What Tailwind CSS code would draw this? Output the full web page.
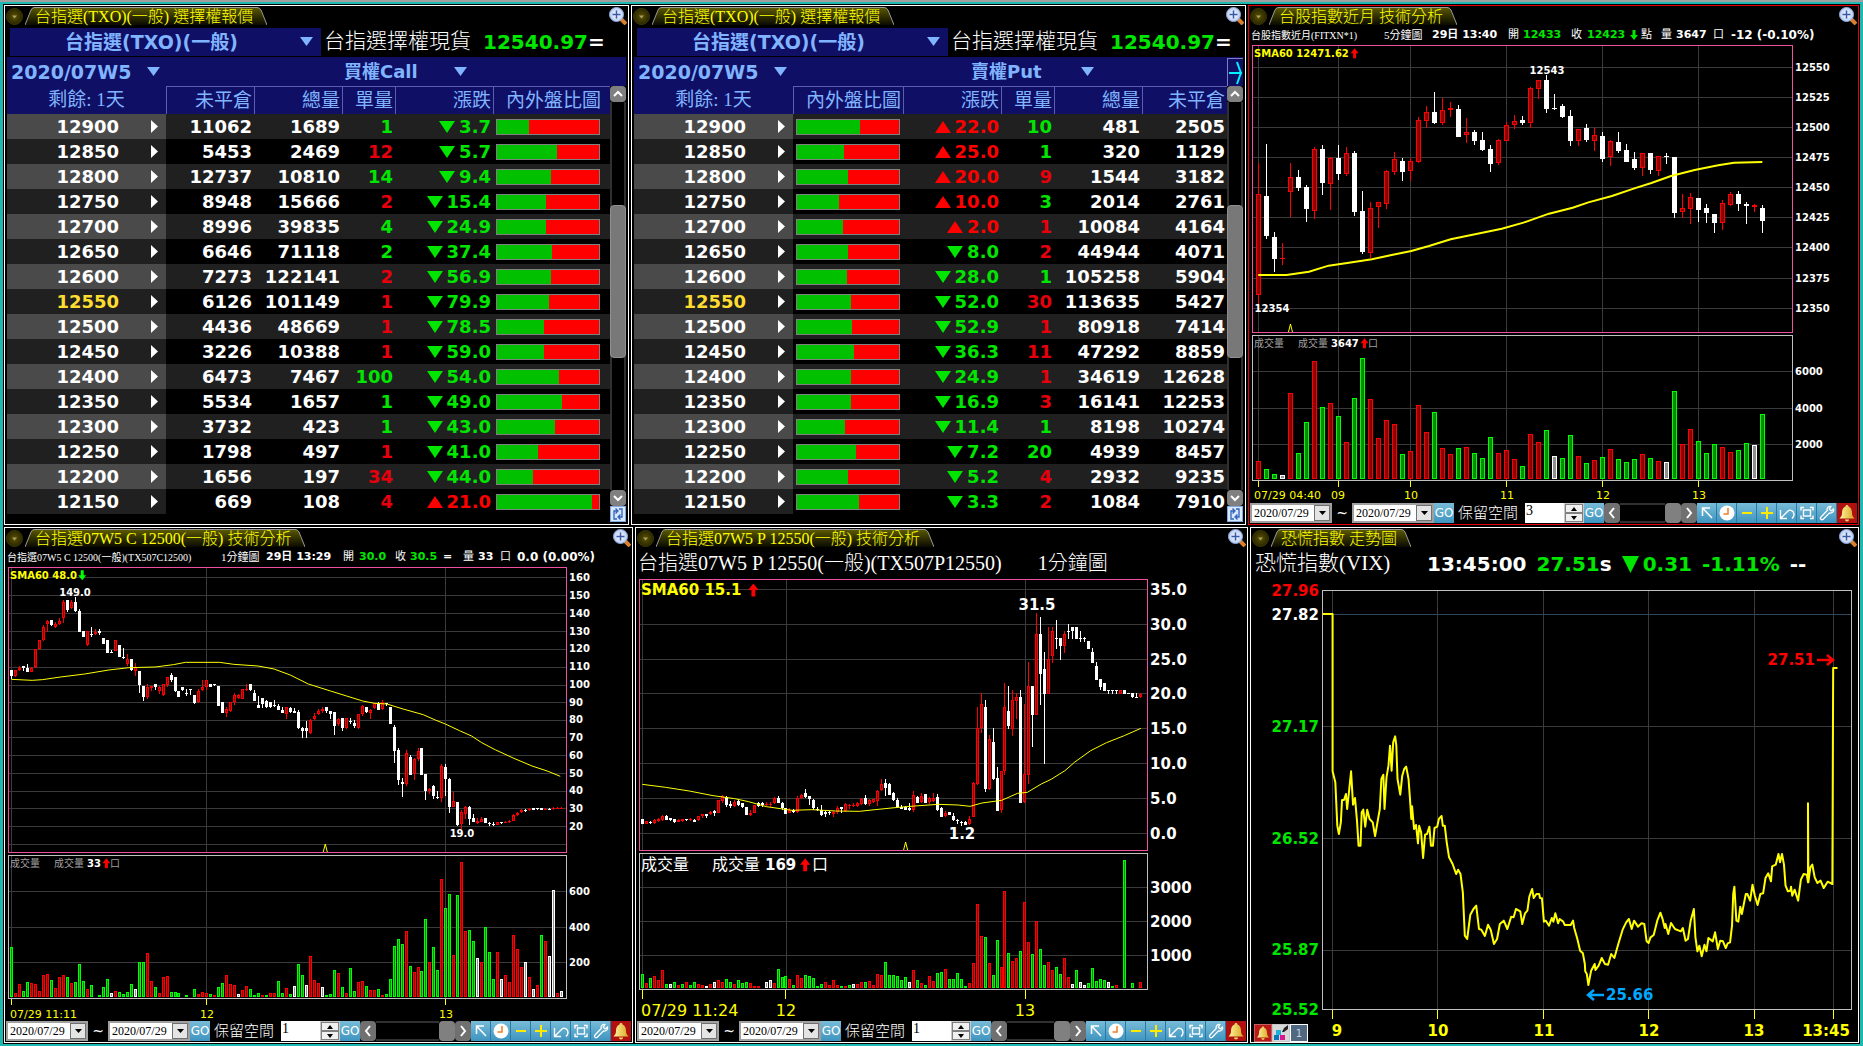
<!DOCTYPE html>
<html lang="zh-Hant">
<head>
<meta charset="utf-8">
<meta name="viewport" content="width=device-width, initial-scale=1">
<title>台指選擇權看盤</title>
<script src="https://cdn.jsdelivr.net/npm/@tailwindcss/browser@4"></script>
</head>
<body class="bg-[#1fb8b0] border-t-2 border-[#a0a0a0] text-white font-['DejaVu_Sans','Noto_Sans_CJK_TC',sans-serif]">

<svg class="absolute size-0" aria-hidden="true">
  <defs>
    <linearGradient id="tabFill" x1="0" y1="0" x2="0" y2="1"><stop offset="0" stop-color="#5c5a00"/><stop offset="1" stop-color="#0a0a00"/></linearGradient>
    <radialGradient id="lens"><stop offset="0" stop-color="#ffffff"/><stop offset="1" stop-color="#b8ccf4"/></radialGradient>
    <radialGradient id="knob"><stop offset="0" stop-color="#5a5200"/><stop offset="1" stop-color="#2a2600"/></radialGradient>
    <linearGradient id="bellFill" x1="0" x2="1"><stop offset="0" stop-color="#fff3a0"/><stop offset="1" stop-color="#d8a820"/></linearGradient>
    <symbol id="bell" viewBox="0 0 20 20"><path d="M10 2c1 0 1.500.7 1.500 1.500C14 4.500 15 7 15 10c0 2.500 1 4 2.500 5.500h-15C4 14 5 12.500 5 10c0-3 1-5.500 3.500-6.500C8.500 2.700 9 2 10 2z" fill="url(#bellFill)"/><path d="M8 16.500h4c0 1.300-.9 2-2 2s-2-.7-2-2z" fill="#f4dc6a"/></symbol>
    <symbol id="undo" viewBox="0 0 20 20"><path d="M3.500 7v8.500H10M4 15l7-7c2-2 6 0 6 3.500 0 2-1 3-2 4" fill="none" stroke="#fff" stroke-width="1.400"/></symbol>
    <symbol id="full" viewBox="0 0 20 20"><path d="M4 7.500V4.500h3M13 4.500h3v3M16 12.500v3h-3M7 15.500H4v-3" fill="none" stroke="#fff" stroke-width="1.400"/><rect x="6.500" y="7" width="7" height="6" fill="none" stroke="#fff" stroke-width="1.400"/></symbol>
    <symbol id="wrench" viewBox="0 0 20 20"><path d="M14 3.500c-2.500-.5-4.500 1.500-3.800 4L4 14c-1.500 1.600.6 3.700 2.200 2.200l6.300-6.300c2.600.7 4.600-1.400 4-4l-2.300 2-2-1.800z" fill="none" stroke="#fff" stroke-width="1.300" stroke-linejoin="round"/></symbol>
    <symbol id="pick" viewBox="0 0 20 20"><path d="M13 5H5.500v8M5.500 5l9.500 10" fill="none" stroke="#fff" stroke-width="1.500"/></symbol>
    <symbol id="clock" viewBox="0 0 20 20"><circle cx="10" cy="10" r="7.500" fill="#fff"/><path d="M11 5v6H6.500" fill="none" stroke="#f08020" stroke-width="1.500"/></symbol>
    <symbol id="minus" viewBox="0 0 20 20"><path d="M5 10h10" stroke="#ffea00" stroke-width="2"/></symbol>
    <symbol id="plus" viewBox="0 0 20 20"><path d="M4 10h12M10 4v12" stroke="#ffea00" stroke-width="2"/></symbol>
  </defs>
</svg>

<main class="border-x-[3px] border-y-2 border-[#1fb8b0] bg-black p-px">
  <div class="flex flex-col gap-[2px]">
    <div class="grid grid-cols-[minmax(0,625fr)_minmax(0,615fr)_minmax(0,611fr)] gap-[2px]">
      <section class="border border-white" data-title="台指選(TXO)(一般) 選擇權報價"><div data-options="call"></div></section>
      <section class="border border-white" data-title="台指選(TXO)(一般) 選擇權報價"><div data-options="put"></div></section>
      <section class="border border-red-600" data-title="台股指數近月 技術分析">
        <div class="grid h-[18px] grid-cols-[133px_48px_76px_15px_48px_16px_43px_11px_20px_15px_37px_18px_auto] items-center pl-[2px] text-[11px] font-bold whitespace-nowrap">
          <span class="font-['Liberation_Serif','Noto_Sans_CJK_TC',serif] text-[10px] font-normal">台股指數近月(FITXN*1)</span><span class="font-['Liberation_Serif','Noto_Sans_CJK_TC',serif] font-normal">5分鐘圖</span><span>29日 13:40</span><span class="font-normal">開</span><span class="text-[#00e600]">12433</span><span class="font-normal">收</span><span class="text-[#00e600]">12423</span><svg class="h-[10px] w-[8px] fill-[#00e600]" viewBox="0 0 8 10"><path d="M2.500 0h3v5H8L4 10 0 5h2.500z"/></svg><span class="font-normal">點</span><span class="font-normal">量</span><span>3647</span><span class="font-normal">口</span><span class="text-xs">-12 (-0.10%)</span>
        </div>
        <svg id="tx" class="block h-auto w-full" viewBox="1249 44 609 458" role="img" aria-label="台股指數近月 5分鐘圖"></svg>
        <div data-toolbar="3"></div>
      </section>
    </div>
    <div class="grid grid-cols-[minmax(0,629fr)_minmax(0,613fr)_minmax(0,609fr)] gap-[2px]">
      <section class="border border-white" data-title="台指選07W5 C 12500(一般) 技術分析">
        <div class="grid h-[18px] grid-cols-[214px_45px_77px_16px_36px_15px_33px_20px_15px_22px_17px_auto] items-center pl-[2px] text-[11px] font-bold whitespace-nowrap">
          <span class="font-['Liberation_Serif','Noto_Sans_CJK_TC',serif] text-[10px] font-normal">台指選07W5 C 12500(一般)(TX507C12500)</span><span class="font-['Liberation_Serif','Noto_Sans_CJK_TC',serif] font-normal">1分鐘圖</span><span>29日 13:29</span><span class="font-normal">開</span><span class="text-[#00e600]">30.0</span><span class="font-normal">收</span><span class="text-[#00e600]">30.5</span><span>=</span><span class="font-normal">量</span><span>33</span><span class="font-normal">口</span><span class="text-xs">0.0 (0.00%)</span>
        </div>
        <svg id="call" class="block h-auto w-full" viewBox="5 566 627 454" role="img" aria-label="台指選07W5 C 12500 1分鐘圖"></svg>
        <div data-toolbar="1"></div>
      </section>
      <section class="border border-white" data-title="台指選07W5 P 12550(一般) 技術分析">
        <div class="flex h-[30px] items-center gap-9 pl-[2px] font-['Liberation_Serif','Noto_Sans_CJK_TC',serif] text-[20px] font-light whitespace-nowrap"><span>台指選07W5 P 12550(一般)(TX507P12550)</span><span>1分鐘圖</span></div>
        <svg id="put" class="block h-auto w-full" viewBox="636 578 611 442" role="img" aria-label="台指選07W5 P 12550 1分鐘圖"></svg>
        <div data-toolbar="1"></div>
      </section>
      <section class="relative border border-white" data-title="恐慌指數 走勢圖">
        <div class="flex h-8 items-center gap-[10px] pl-1 text-[20px] font-bold whitespace-nowrap">
          <span class="w-[162px] font-['Liberation_Serif','Noto_Sans_CJK_TC',serif] text-[21px] font-light">恐慌指數(VIX)</span><span>13:45:00</span><span class="text-[#00e600]">27.51<span class="text-white">s</span></span><span class="flex items-center gap-1 text-[#00e600]"><svg class="h-[17px] w-[17px] fill-[#00e600]" viewBox="0 0 17 17"><path d="M0 0h17L8.500 17z"/></svg>0.31</span><span class="text-[#00e600]">-1.11%</span><span>--</span>
        </div>
        <svg id="vix" class="block h-auto w-full" viewBox="1251 580 607 462" role="img" aria-label="恐慌指數走勢圖"></svg>
        <div class="absolute bottom-0 left-[3px] flex">
          <button type="button" aria-label="警示" class="size-[18px] border border-[#c06060] bg-[#b81818]"><svg class="size-4"><use href="#bell"/></svg></button>
          <button type="button" aria-label="色彩設定" class="size-[18px] border border-[#c8c8c8] bg-[#d8d8d8]"><svg class="size-4" viewBox="0 0 16 16"><path d="M3 5h5v5H3z" fill="#20b0e0"/><path d="M1 10h5v5H1z" fill="#0878b8"/><path d="M7 10h5v5H7z" fill="#d81890"/><path d="M9 7l2-4 4-3v4l-4 3z" fill="#222"/></svg></button>
          <button type="button" class="flex size-[18px] items-center justify-center border border-white bg-[#506880] text-[10px] text-[#c8d4e0]">1</button>
        </div>
      </section>
    </div>
  </div>
</main>

<script>
/* Title tab of each panel */
document.querySelectorAll('[data-title]').forEach(s => s.insertAdjacentHTML('afterbegin', `
  <header class="flex h-5 items-center gap-[2px] pr-px pl-px">
    <button type="button" aria-label="選單" class="shrink-0"><svg class="block size-[17px]" viewBox="0 0 17 17"><circle cx="8.500" cy="8.500" r="8" fill="url(#knob)" stroke="#3c3800"/><path d="M6 7.500h5L8.500 10.500z" fill="#a8a060"/></svg></button>
    <div class="flex h-[18px] min-w-0">
      <svg class="h-[18px] w-[10px] shrink-0" viewBox="0 0 10 18"><path d="M0 18L6 3Q7 0 10 0V18z" fill="url(#tabFill)"/><path d="M0 18L6 3Q7 .5 10 .5" fill="none" stroke="#999"/></svg>
      <h2 class="border-t border-[#999] bg-linear-to-b from-[#5c5a00] to-[#0a0a00] font-['Liberation_Serif','Noto_Sans_CJK_TC',serif] text-base leading-[17px] font-light whitespace-nowrap text-[#ffff00]">${s.dataset.title}</h2>
      <svg class="h-[18px] w-[14px] shrink-0" viewBox="0 0 14 18"><path d="M14 18L8 3Q6.500 0 4 0H0V18z" fill="url(#tabFill)"/><path d="M14 18L8 3Q6.500.5 4 .5H0" fill="none" stroke="#999"/></svg>
    </div>
    <button type="button" aria-label="放大" class="ml-auto shrink-0"><svg class="block size-[18px]" viewBox="0 0 18 18"><path d="M12 12l5 5" stroke="#d88030" stroke-width="4"/><circle cx="7.500" cy="7.500" r="7" fill="url(#lens)" stroke="#8ea8dc"/><path d="M3.500 7.500h8M7.500 3.500v8" stroke="#3858a8" stroke-width="1.500"/></svg></button>
  </header>`));

/* Bottom toolbar of the chart panels */
const tool = (id, label) => `<button type="button" aria-label="${label}" class="size-5 shrink-0 border-r border-[#2a7aa8] bg-linear-to-b from-[#78bcd8] to-[#3c94c0]"><svg class="block size-5"><use href="#${id}"/></svg></button>`;
const dateBox = label => `<span class="relative flex h-5 w-[82px] shrink-0"><select aria-label="${label}" class="w-full appearance-none border-2 border-[#a0a0a0] bg-white pl-[2px] font-['Liberation_Serif',serif] text-xs leading-4 text-black"><option>2020/07/29</option></select><svg class="pointer-events-none absolute top-[2px] right-[2px] h-4 w-4 border border-[#707070] bg-[#e4e4e4]" viewBox="0 0 14 14"><path d="M4 5h7L7.500 9z"/></svg></span>`;
const go = '<button type="button" class="h-5 w-5 shrink-0 bg-linear-to-b from-[#78bcd8] to-[#3c94c0] font-[\'Liberation_Sans\',sans-serif] text-xs">GO</button>';
const scr = (d, label) => `<button type="button" aria-label="${label}" class="h-5 w-4 shrink-0 rounded-sm bg-[#707070]"><svg class="block h-5 w-4" viewBox="0 0 16 20"><path d="${d}" fill="none" stroke="#fff" stroke-width="2"/></svg></button>`;
document.querySelectorAll('[data-toolbar]').forEach((t, i) => {
  t.innerHTML = `<div class="flex h-[22px] items-center px-px">
    ${dateBox('起始日期')}<span class="w-5 shrink-0 text-center text-sm">~</span>${dateBox('結束日期')}${go}
    <label for="space${i}" class="w-[71px] shrink-0 pl-1 font-light text-[15px] whitespace-nowrap">保留空間</label>
    <input id="space${i}" type="text" value="${t.dataset.toolbar}" class="h-5 w-[39px] shrink-0 bg-white pb-1 pl-px font-['Liberation_Serif',serif] text-sm text-black">
    <span class="flex h-5 w-5 shrink-0 flex-col bg-[#c8c8c8] p-px">
      <button type="button" aria-label="增加" class="flex-1 border border-[#808080] bg-[#f0f0f0]"><svg class="mx-auto block h-[4px] w-[6px]" viewBox="0 0 6 4"><path d="M0 4h6L3 0z"/></svg></button>
      <button type="button" aria-label="減少" class="flex-1 border border-[#808080] bg-[#f0f0f0]"><svg class="mx-auto block h-[4px] w-[6px]" viewBox="0 0 6 4"><path d="M0 0h6L3 4z"/></svg></button>
    </span>${go}
    ${scr('M10 5L6 10l4 5', '向左')}<span class="h-5 min-w-0 flex-1 border-y-2 border-[#303030] bg-black"></span><span class="h-5 w-4 shrink-0 rounded-sm bg-[#808080]"></span>${scr('M6 5l4 5-4 5', '向右')}
    ${tool('pick', '選取')}${tool('clock', '時間')}${tool('minus', '縮小')}${tool('plus', '放大')}${tool('undo', '復原')}${tool('full', '全螢幕')}${tool('wrench', '設定')}
    <button type="button" aria-label="警示" class="size-5 shrink-0 bg-[#b01010]"><svg class="block size-5"><use href="#bell"/></svg></button>
  </div>`;
});

/* Option quotes: strike, open interest, volume, last size (signed by side), change, buy share % */
const quotes = {
  call: [[12900,11062,1689,'g1','-3.7',31],[12850,5453,2469,'r12','-5.7',59],[12800,12737,10810,'g14','-9.4',53],[12750,8948,15666,'r2','-15.4',48],[12700,8996,39835,'g4','-24.9',48],[12650,6646,71118,'g2','-37.4',54],[12600,7273,122141,'r2','-56.9',53],[12550,6126,101149,'r1','-79.9',51],[12500,4436,48669,'r1','-78.5',46],[12450,3226,10388,'r1','-59.0',46],[12400,6473,7467,'g100','-54.0',61],[12350,5534,1657,'g1','-49.0',64],[12300,3732,423,'g1','-43.0',57],[12250,1798,497,'r1','-41.0',40],[12200,1656,197,'r34','-44.0',35],[12150,669,108,'r4','+21.0',93]],
  put: [[12900,2505,481,'g10','+22.0',62],[12850,1129,320,'g1','+25.0',46],[12800,3182,1544,'r9','+20.0',50],[12750,2761,2014,'g3','+10.0',41],[12700,4164,10084,'r1','+2.0',45],[12650,4071,44944,'r2','-8.0',50],[12600,5904,105258,'g1','-28.0',49],[12550,5427,113635,'r30','-52.0',53],[12500,7414,80918,'r1','-52.9',54],[12450,8859,47292,'r11','-36.3',56],[12400,12628,34619,'r1','-24.9',53],[12350,12253,16141,'r3','-16.9',53],[12300,10274,8198,'g1','-11.4',47],[12250,8457,4939,'g20','-7.2',58],[12200,9235,2932,'r4','-5.2',50],[12150,7910,1084,'r2','-3.3',61]]
};
const down = 'pointer-events-none absolute top-1/2 -mt-[5px] h-[9px] w-[13px] fill-[#80b4ff]';
const tri = '<path d="M0 0h13L6.500 9z"/>';
document.querySelectorAll('[data-options]').forEach(box => {
  const side = box.dataset.options, isCall = side === 'call';
  const cell = {
    oi: r => `<td class="pr-[2px] text-right">${r[1]}</td>`,
    vol: r => `<td class="pr-[2px] text-right">${r[2]}</td>`,
    size: r => `<td class="pr-[2px] text-right ${r[3][0] === 'g' ? 'text-[#00e600]' : 'text-red-600'}">${r[3].slice(1)}</td>`,
    chg: r => `<td class="pr-[2px] ${r[4][0] === '-' ? 'fill-[#00e600] text-[#00e600]' : 'fill-[#ff0000] text-[#ff0000]'}"><span class="flex items-center justify-end gap-1"><svg class="h-3 w-4" viewBox="0 0 16 12"><path d="${r[4][0] === '-' ? 'M0 0h16L8 12z' : 'M0 12h16L8 0z'}"/></svg>${r[4].slice(1)}</span></td>`,
    bar: r => `<td class="pr-[2px] pl-[3px]"><div class="h-4 w-[104px] border border-[#808080] bg-[#ff0000]"><div class="h-full bg-[#00c000]" style="width:${r[5]}%"></div></div></td>`
  };
  const names = { oi: '未平倉', vol: '總量', size: '單量', chg: '漲跌', bar: '內外盤比圖' };
  const order = isCall ? ['oi', 'vol', 'size', 'chg', 'bar'] : ['bar', 'chg', 'size', 'vol', 'oi'];
  const cols = isCall
    ? '<col class="w-[159px]"><col class="w-[88px]"><col class="w-[88px]"><col class="w-[53px]"><col class="w-[98px]"><col class="w-[117px]">'
    : '<col class="w-[159px]"><col class="w-[110px]"><col class="w-[98px]"><col class="w-[53px]"><col class="w-[88px]"><col class="w-[85px]">';
  const th = n => `<th class="border-t border-l border-[#5c5cb0] pr-[2px] text-right font-normal ${isCall && n === 'bar' ? 'pr-[9px]' : ''}">${names[n]}</th>`;
  box.innerHTML = `
  <div class="flex h-[31px] items-center px-[2px]">
    <span class="relative ml-[3px] h-7 w-[311px] shrink-0"><select aria-label="商品" class="h-full w-full appearance-none bg-[#0f0f66] pr-7 text-[19px] leading-7 font-bold text-[#80b4ff] [text-align-last:center]"><option>台指選(TXO)(一般)</option></select><svg class="${down} right-2" viewBox="0 0 13 9">${tri}</svg></span>
    <span class="flex items-center pl-[3px] whitespace-nowrap"><span class="w-[159px] text-[21px] font-light">台指選擇權現貨</span><span class="text-[20px] font-bold text-[#00e600]">12540.97<span class="text-white">=</span></span></span>
  </div>
  <div class="mx-[2px] flex h-[29px] items-center bg-[#0f0f66] pl-1 text-[#80b4ff]">
    <span class="relative h-7 w-[149px]"><select aria-label="到期月份" class="h-full w-full appearance-none text-[19px] leading-7 font-bold"><option>2020/07W5</option></select><svg class="${down} right-0" viewBox="0 0 13 9">${tri}</svg></span>
    <span class="relative ml-[184px] h-7 w-[123px]"><select aria-label="買賣權" class="h-full w-full appearance-none text-[18px] leading-7 font-bold"><option>${isCall ? '買權Call' : '賣權Put'}</option></select><svg class="${down} right-0" viewBox="0 0 13 9">${tri}</svg></span>
    ${isCall ? '' : '<button type="button" aria-label="展開欄位" class="ml-auto h-7 w-4 border-t border-l border-[#8080c0]"><svg class="block h-7 w-[15px]" viewBox="0 0 15 28"><path d="M1 14h13M9 3q2 6 4 11-2 5-4 11" fill="none" stroke="#00f0ff" stroke-width="2"/></svg></button>'}
  </div>
  <div class="mx-[2px] flex h-[438px] items-start">
    <table class="min-w-0 flex-1 table-fixed border-separate border-spacing-0 text-[18px] leading-6 font-bold">
      <colgroup>${cols}</colgroup>
      <thead><tr class="h-7 bg-[#0f0f66] font-['Liberation_Serif','Noto_Sans_CJK_TC',serif] text-[19px] text-[#80b4ff]"><th class="font-normal">剩餘: 1天</th>${order.map(th).join('')}</tr></thead>
      <tbody>${quotes[side].map((r, i) => `<tr class="h-[25px] ${i % 2 ? 'bg-black' : 'bg-[#202020]'}"><th scope="row" class="${i % 2 ? 'bg-[#202020]' : 'bg-[#4a4a4a]'} ${r[0] === 12550 ? 'text-[#ffdd30]' : ''}"><span class="flex items-center justify-end gap-8 pr-2">${r[0]}<svg class="h-[13px] w-[7px] fill-white" viewBox="0 0 7 13"><path d="M0 0l7 6.500L0 13z"/></svg></span></th>${order.map(n => cell[n](r)).join('')}</tr>`).join('')}</tbody>
    </table>
    <div class="flex h-[436px] w-4 shrink-0 flex-col">
      <button type="button" aria-label="向上捲動" class="h-4 rounded-sm bg-[#808080]"><svg class="mx-auto block h-4 w-4" viewBox="0 0 16 16"><path d="M4 10l4-4 4 4" fill="none" stroke="#fff" stroke-width="2"/></svg></button>
      <div class="flex flex-1 flex-col border-x-2 border-[#303030] bg-black"><div class="flex-[104]"></div><div class="-mx-[2px] flex-[151] rounded-sm border border-[#909090] bg-[#787878]"></div><div class="flex-[133]"></div></div>
      <button type="button" aria-label="向下捲動" class="h-4 rounded-sm bg-[#808080]"><svg class="mx-auto block h-4 w-4" viewBox="0 0 16 16"><path d="M4 6l4 4 4-4" fill="none" stroke="#fff" stroke-width="2"/></svg></button>
      <button type="button" aria-label="重新整理" class="h-4 border border-[#80a8e0] bg-[#d8e8ff]"><svg class="mx-auto block h-[14px] w-[14px]" viewBox="0 0 14 14"><path d="M6 12H3V4h3M4.500 1.500L7 4 4.500 6.500M8 2h3v8H8M9.500 7.500L7 10l2.500 2.500" fill="none" stroke="#3060b8" stroke-width="1.300"/></svg></button>
    </div>
  </div>`;
});

/* Chart drawing. Heights in the series are in thirds of a unit; kx is the horizontal resolution. */
const line = (x1, y1, x2, y2, c, w = 1) => `<line x1="${x1}" y1="${y1}" x2="${x2}" y2="${y2}" stroke="${c}" stroke-width="${w}" shape-rendering="crispEdges"/>`;
const frame = (x1, y1, x2, y2, c) => `<rect x="${x1 + .5}" y="${y1 + .5}" width="${x2 - x1}" height="${y2 - y1}" fill="none" stroke="${c}"/>`;
const label = (x, y, t, size, c, o = '') => `<text x="${Math.round(x)}" y="${Math.round(y + size * .36)}" font-size="${size}" fill="${c}" ${o}>${t}</text>`;
const bold = 'font-weight="700"', mid = 'text-anchor="middle"';
const arrow = (x, y, s, up, c) => `<path transform="translate(${x} ${y}) scale(${s} ${up ? s : -s})" d="M0-5L4 0H1.500V5h-3V0H-4z" fill="${c}"/>`;
const tints = { r: ['#ff0000', '#8b0000'], g: ['#00ff00', '#008b00'], w: ['#ffffff', '#909090'] };

function stock(id, o) {
  const X = v => o.ox + v / o.kx, P = v => o.oy + v / 3, V = v => o.vy + v / 3;
  const F = o.frame, half = (o.body - 1) / 2;
  let s = '';
  o.vlines.forEach(v => { const x = Math.floor(X(v)) + .5; s += line(x, F[1], x, F[2], '#3a3a3a') + line(x, F[3], x, F[4], '#3a3a3a'); });
  o.plines.forEach(v => { const y = Math.round(P(v)) + .5; s += line(F[0], y, F[5], y, '#3a3a3a'); });
  o.volLines.forEach(v => { const y = Math.round(V(v)) + .5; s += line(F[0], y, F[5], y, '#3a3a3a'); });
  o.candles.split(',').forEach((t, i) => {
    const [c, ...n] = t.split(' '), [a, b, h, l] = n.map(v => Math.round(P(+v)));
    const x = Math.floor(X(o.first + i * o.step)), col = c === 'r' ? '#ff0000' : '#ffffff';
    s += line(x + .5, h, x + .5, l, col);
    s += c === 'r' && b - a > 1
      ? `<rect x="${x - half + .5}" y="${a + .5}" width="${o.body - 1}" height="${b - a - 1}" fill="#8b0000" stroke="#ff0000"/>`
      : `<rect x="${x - half}" y="${a}" width="${o.body}" height="${Math.max(1, b - a)}" fill="${col}"/>`;
  });
  o.volume.split(' ').forEach((t, i) => {
    const [edge, fill] = tints[t[0]], y = Math.round(V(+t.slice(1))), base = Math.round(V(o.base));
    const x = Math.floor(X(o.first + i * o.step)) - half;
    s += `<rect x="${x + .5}" y="${y + .5}" width="${o.body - 1}" height="${Math.max(0, base - y - 1)}" fill="${fill}" stroke="${edge}"/>`;
  });
  s += `<polyline fill="none" stroke="#ffff00" stroke-width="${o.smaWidth}" points="${o.sma.split(' ').map(p => { const [a, b] = p.split(','); return X(+a) + ',' + P(+b); }).join(' ')}"/>`;
  const m = X(o.mark);
  s += `<path d="M${m - 2} ${F[2]}L${m} ${F[2] - 8}L${m + 2} ${F[2]}" fill="none" stroke="#ffff00"/>`;
  s += frame(F[0], F[1], F[5], F[2], '#f050a0') + frame(F[0], F[3], F[5], F[4], '#c0c0c0');
  o.ticks.forEach(([v, t], i) => { const x = Math.floor(X(v)) + .5; s += line(x, F[4] + 1, x, F[4] + o.tick, '#ffff00') + (i ? label(X(v), o.ty, t, o.tsize, '#ffff00', mid) : label(F[0] + 2, o.ty, t, o.tsize, '#ffff00')); });
  o.plabels.forEach((t, i) => { s += label(F[5] + 3, P(o.plines[i]), t, o.size, '#fff', bold); });
  o.vlabels.forEach((t, i) => { s += label(F[5] + 3, V(o.volLines[i]), t, o.size, '#fff', bold); });
  o.notes.forEach(n => { s += label(X(n[0]), P(n[1]), n[2], o.size, '#fff', bold + ' ' + (n[3] || mid)); });
  s += label(F[0] + 2, P(o.smaAt[1]), o.smaText, o.size, '#ffff00', bold) + arrow(X(o.smaAt[0]), P(o.smaAt[1]), o.as, o.smaUp, o.smaUp ? '#ff0000' : '#00ff00');
  const vt = o.vtext, cy = V(vt.y);
  s += label(F[0] + 2, cy, '成交量', vt.size, vt.c) + label(X(vt.x[0]), cy, '成交量', vt.size, vt.c) + label(X(vt.x[1]), cy, vt.v, o.size, '#fff', bold) + arrow(X(vt.x[2]), cy, o.as, true, '#ff0000') + label(X(vt.x[3]), cy, '口', vt.size, vt.c);
  document.getElementById(id).innerHTML = s;
}

stock('tx', {
  ox: 1246, oy: 0, vy: 320, kx: 2.541, first: 32, step: 20.33, body: 5, base: 478, size: 10, as: 1, smaWidth: 2,
  frame: [1252, 45, 332, 335, 480, 1792], vlines: [32, 235, 418, 662, 906, 1150],
  plines: [202, 292, 382, 472, 562, 652, 742, 835, 925], plabels: [12550, 12525, 12500, 12475, 12450, 12425, 12400, 12375, 12350],
  volLines: [154, 265, 373], vlabels: [6000, 4000, 2000], mark: 113, tick: 7, ty: 495, tsize: 11,
  ticks: [[32, '07/29 04:40'], [235, '09'], [418, '10'], [662, '11'], [906, '12'], [1150, '13']],
  notes: [[764, 211, '12543'], [65, 925, '12354']], smaText: 'SMA60 12471.62', smaAt: [276, 160], smaUp: true,
  vtext: { y: 70, size: 10, c: '#a0a0a0', v: '3647', x: [132, 216, 301, 311] },
  candles: 'r 583 884 489 911,w 588 708 432 717,w 711 776 696 815,r 773 778 729 795,r 531 577 489 651,w 531 563 510 573,w 561 627 555 666,r 448 632 441 657,w 447 548 435 585,r 474 551 472 630,w 474 521 435 540,r 460 521 441 528,w 459 635 453 648,w 633 755 573 762,r 625 758 606 775,r 607 620 605 684,r 514 611 511 627,r 478 515 456 525,w 483 515 474 543,r 483 513 474 543,r 361 485 351 489,r 337 363 318 384,w 336 369 276 372,r 330 368 294 375,r 325 331 306 351,w 327 411 315 411,r 397 404 354 429,w 396 422 390 435,w 420 450 396 453,w 447 491 435 516,r 421 488 417 494,r 374 422 366 424,r 364 374 345 387,w 360 369 348 375,r 265 368 261 384,r 241 266 240 297,w 240 327 225 339,w 324 327 282 330,w 318 350 312 354,w 348 423 330 438,r 388 422 388 438,w 384 420 372 426,r 406 422 384 453,w 408 477 396 486,r 424 472 420 498,w 426 453 396 459,w 450 486 432 486,w 477 504 456 510,r 460 504 459 528,w 459 510 459 522,r 469 512 468 528,w 467 470 459 492,w 471 639 471 654,r 625 635 582 654,r 592 626 579 671,w 594 630 594 666,w 624 639 612 669,w 642 668 642 699,r 609 668 600 690,r 583 614 576 618,w 582 612 573 633,w 612 617 606 672,r 615 621 612 636,w 624 663 615 699',
  volume: 'r424 g448 g463 w466 r220 g400 g307 r124 g262 r250 g289 r367 g235 g115 r238 r355 r301 r313 g403 r394 r256 r337 g277 r385 r403 g385 r382 g400 g415 g352 r400 r391 r418 g439 r343 r367 g331 w409 g415 g346 r409 g430 r421 g412 r388 g418 g427 g418 r403 g415 r424 w427 g214 r373 r328 g364 g400 g373 r382 r397 g391 g370 w376 g283',
  sma: '31,825 103,825 160,815 210,797 270,787 320,778 370,765 420,753 465,738 520,718 585,702 650,686 705,668 770,641 830,623 870,607 930,588 985,566 1030,549 1080,528 1140,510 1200,496 1240,488 1312,486'
});

stock('call', {
  ox: 0, oy: 524, vy: 840, kx: 2.481, first: 29, step: 9.883, body: 3, base: 471, size: 10, as: 1, smaWidth: 1,
  frame: [8, 567, 852, 855, 998, 566], vlines: [29, 513, 1106],
  plines: [160, 214, 268, 322, 374, 428, 482, 535, 587, 640, 694, 748, 800, 853, 907, 961], plabels: [160, 150, 140, 130, 120, 110, 100, 90, 80, 70, 60, 50, 40, 30, 20],
  volLines: [154, 262, 367], vlabels: [600, 400, 200], mark: 807, tick: 7, ty: 1014, tsize: 11,
  ticks: [[29, '07/29 11:11'], [513, '12'], [1106, '13']],
  notes: [[187, 205, '149.0'], [1145, 928, '19.0']], smaText: 'SMA60 48.0', smaAt: [204, 154], smaUp: false,
  vtext: { y: 70, size: 10, c: '#a0a0a0', v: '33', x: [134, 216, 264, 274] },
  candles: 'w 437 455 437 465,r 438 455 438 460,r 432 438 427 440,w 427 433 425 440,w 433 443 420 445,r 433 443 430 445,r 374 428 374 433,r 349 374 348 375,r 310 349 304 351,r 290 300 288 323,w 288 304 288 306,r 300 310 294 311,r 290 301 282 303,r 235 283 228 297,w 228 258 228 263,r 234 253 228 256,w 234 262 219 264,w 260 323 255 323,w 321 339 321 339,r 322 363 322 366,w 329 332 309 339,r 323 331 316 332,w 320 327 315 333,w 342 359 342 361,w 348 386 348 386,w 383 386 378 387,r 349 380 348 382,w 363 399 363 400,w 398 402 373 404,r 405 419 390 425,w 405 438 405 440,r 430 441 417 456,w 441 483 441 508,w 486 520 486 531,r 489 518 479 524,r 486 492 486 500,w 480 489 480 498,r 490 501 486 510,r 480 513 480 515,r 460 483 460 488,w 453 468 447 474,w 459 502 459 504,w 501 518 501 519,w 490 497 489 502,w 506 510 495 516,w 496 498 495 512,w 513 537 513 540,r 501 534 495 537,r 489 498 468 501,r 469 488 468 498,w 480 488 480 489,w 480 484 480 486,w 486 545 486 546,w 534 566 534 567,r 556 567 549 579,r 535 562 534 564,r 514 534 507 543,r 514 522 510 525,r 495 524 495 525,r 494 497 480 500,w 480 497 480 500,w 507 530 498 531,w 543 551 516 552,w 522 539 522 552,w 531 549 528 552,w 534 549 533 551,w 542 545 528 549,w 545 557 540 558,w 558 566 549 567,r 550 570 548 585,w 552 563 549 567,w 561 566 552 568,w 564 612 558 615,w 612 620 610 641,w 612 622 591 642,r 587 627 585 630,r 577 586 567 588,r 562 570 555 573,r 556 562 549 567,w 549 562 549 567,w 562 571 561 585,w 564 606 564 632,r 586 600 582 606,w 582 612 582 620,r 583 613 582 615,w 590 593 583 600,w 598 606 587 613,r 570 613 570 615,r 545 571 543 577,w 549 563 549 566,r 557 566 555 585,r 538 551 536 556,w 537 557 534 558,r 535 556 529 557,w 538 541 537 546,w 549 600 549 600,w 609 681 603 717,w 678 769 672 783,w 774 781 762 818,r 687 780 678 785,w 698 752 693 753,r 704 751 702 768,r 680 704 672 711,w 672 753 672 753,w 750 800 750 827,r 796 800 793 810,w 787 815 783 825,w 818 822 801 824,r 727 821 720 833,w 729 765 720 815,w 765 848 762 867,r 832 849 804 850,w 834 902 834 906,r 865 900 858 914,r 848 870 846 885,w 849 885 847 903,w 882 893 870 895,r 892 897 882 900,r 884 893 880 894,w 882 897 882 898,w 896 899 894 906,w 900 903 894 906,r 895 903 893 904,w 894 897 894 900,r 895 897 891 898,r 890 895 888 896,r 872 890 870 891,r 866 873 864 875,r 858 865 855 867,w 858 861 855 864,r 856 859 852 861,w 853 857 852 858,w 853 856 851 857,w 853 857 852 858,r 854 857 852 858,w 854 857 852 858,r 852 855 850 857,r 851 854 849 856,r 851 854 849 856',
  volume: 'g321 r459 r432 g454 g427 r430 r432 r454 r406 r403 g421 r445 r412 r406 g412 r430 g427 g373 g424 r448 g436 r468 g466 g442 g418 w460 r454 g457 g462 g457 g433 w448 g366 g366 r340 r424 g442 r459 r412 r408 g457 g457 g460 r468 g465 r468 g448 r463 r457 r460 g462 r466 g442 g430 r406 r433 r436 w463 r451 r439 g448 g466 g460 r466 g466 r460 r460 g424 g460 r445 g463 w439 g373 g406 w436 r349 r421 r430 w442 g466 g463 g391 r400 g442 r460 g385 g454 r427 r424 g439 r451 r451 g448 r466 g463 g418 g319 g298 g313 r274 g379 r397 r382 g394 g238 r367 g322 g391 r118 g205 g163 r346 g166 r67 r274 g271 g304 w355 r367 g262 g337 g418 r337 w418 r406 r427 r286 r328 r382 w367 r412 w448 r436 g286 r304 w349 w151 r460 w454',
  sma: '28,466 80,469 105,467 150,459 210,450 270,438 320,431 385,429 430,422 460,415 545,415 580,421 640,426 680,435 720,453 765,480 820,501 860,516 900,531 930,538 960,540 1000,555 1050,572 1080,588 1105,600 1140,620 1170,636 1195,656 1230,678 1275,703 1320,726 1360,742 1390,757'
});

stock('put', {
  ox: 630, oy: 524, vy: 840, kx: 2.529, first: 32, step: 10.07, body: 3, base: 444, size: 15, as: 1.3, smaWidth: 1,
  frame: [639, 579, 850, 853, 989, 1147], vlines: [32, 396, 1000],
  plines: [196, 301, 406, 508, 613, 718, 823, 928], plabels: ['35.0', '30.0', '25.0', '20.0', '15.0', '10.0', '5.0', '0.0'],
  volLines: [142, 244, 346], vlabels: [3000, 2000, 1000], mark: 697, tick: 10, ty: 1010, tsize: 16,
  ticks: [[32, '07/29 11:24'], [394, '12'], [999, '13']],
  notes: [[1030, 243, '31.5'], [839, 928, '1.2']], smaText: 'SMA60 15.1', smaAt: [312, 198], smaUp: true,
  vtext: { y: 74, size: 16, c: '#ffffff', v: '169', x: [208, 342, 443, 460] },
  candles: 'w 886 899 884 901,r 892 899 890 900,w 893 896 891 900,r 887 896 885 900,r 885 892 883 895,r 877 888 874 892,w 876 888 874 889,w 883 888 881 892,w 886 894 885 897,r 887 893 884 894,r 886 892 884 893,w 886 889 884 890,r 886 889 882 890,w 887 893 885 894,r 876 889 875 890,r 870 877 869 882,w 871 875 869 882,r 865 871 861 874,w 862 867 859 877,r 829 866 827 867,r 816 830 813 838,w 819 842 816 850,w 840 847 830 853,r 835 846 828 848,w 832 842 829 847,w 838 850 836 851,w 850 873 849 874,r 866 873 858 877,r 843 866 842 867,w 836 847 833 848,w 837 842 835 849,r 839 843 835 846,r 839 842 834 850,r 823 837 818 840,w 822 836 816 838,w 837 853 834 858,w 853 870 851 871,r 859 866 853 868,w 859 863 855 866,r 822 865 816 867,r 813 823 810 824,w 808 820 795 823,w 817 826 816 844,w 829 852 825 857,w 855 858 850 861,w 858 872 843 875,w 865 870 862 879,w 863 866 861 873,r 865 869 862 879,r 852 864 847 871,w 849 854 848 867,r 840 862 836 864,r 843 846 840 854,r 842 846 838 849,r 837 846 835 849,r 824 841 822 843,w 823 840 812 843,r 829 840 824 845,r 826 834 824 838,r 800 831 798 845,r 780 799 764 802,w 777 793 764 816,w 780 812 777 814,w 807 829 803 830,w 828 850 822 852,w 848 854 844 856,w 848 857 846 859,w 852 857 838 861,r 814 857 801 863,w 820 837 817 837,r 817 835 807 837,w 810 838 809 838,r 823 835 820 840,r 823 832 808 835,w 819 858 810 861,w 852 878 848 880,r 866 877 862 880,w 865 873 863 874,w 876 889 866 892,w 889 892 886 899,w 893 897 890 905,w 893 902 890 904,r 886 899 876 903,r 777 878 774 879,r 613 780 549 783,r 541 613 507 628,w 549 796 528 804,r 646 796 633 798,w 654 766 612 768,w 763 860 729 861,r 741 857 740 866,r 550 740 477 753,w 561 606 486 614,r 529 614 498 635,r 520 530 507 585,w 519 836 498 837,r 751 835 540 838,r 487 752 415 780,w 486 573 486 668,r 331 572 267 574,w 330 449 279 543,w 435 510 384 720,r 405 510 309 511,r 322 396 309 417,w 342 345 288 375,w 342 366 342 408,r 331 366 322 388,w 321 325 300 345,w 309 322 309 345,w 309 345 309 346,w 342 345 321 354,w 342 345 340 354,w 351 375 350 376,w 384 416 372 417,w 426 467 414 468,w 465 488 465 498,w 477 500 476 501,w 499 502 497 509,w 498 501 497 510,w 499 502 497 510,r 499 509 497 511,w 498 509 498 511,w 507 509 506 511,w 508 520 508 522,w 519 521 507 522,r 509 520 508 521',
  volume: 'g403 r430 g415 r409 r421 r391 g433 w433 g427 r436 g433 r427 g436 g427 r433 r436 w439 r433 w427 r421 r427 g418 g427 r433 g421 g430 g427 r430 r438 r438 r442 w427 w421 r430 g388 g412 g409 r418 g436 r406 r415 g406 g409 g415 g438 g433 r427 r436 r421 r436 g438 r438 g436 w433 r433 r427 g427 r424 r436 r403 r406 g367 g406 g406 g409 g421 g412 w427 r391 g421 r430 g436 r409 r424 g400 g397 r388 g418 g418 g400 g418 g438 r430 r370 r193 r289 g292 r370 g406 g301 r382 r154 g340 r364 r355 g334 r187 r307 g343 r244 g328 g376 r367 r391 g382 g403 r355 r412 w433 g391 w427 w436 g430 g385 g424 g418 g421 w427 g438 r436 w442 g61 w442 g430 w442 r427',
  sma: '31,781 90,790 150,801 210,815 265,824 300,833 345,848 410,859 460,857 520,861 580,862 620,857 670,851 720,846 780,841 830,843 860,847 890,837 940,829 980,808 1005,805 1040,780 1065,766 1100,740 1125,714 1165,680 1205,656 1250,635 1292,613'
});

/* VIX intraday line */
(() => {
  const X = v => 1246 + v / 2.541, Y = v => 524 + v / 3;
  const pts = '195,270 220,270 220,742 227,775 232,905 236,930 241,895 244,828 249,828 254,810 257,855 262,800 267,742 272,842 277,822 282,890 286,965 291,965 294,865 298,857 303,908 308,857 314,885 322,895 328,936 334,895 340,855 344,765 349,752 352,855 357,760 362,725 366,665 370,740 374,655 379,637 382,665 385,765 392,812 397,755 402,735 407,728 413,765 417,830 420,885 422,847 427,915 432,903 437,958 440,905 445,925 450,1002 455,932 460,930 466,908 470,965 475,965 479,912 486,908 490,885 497,876 500,905 505,905 510,955 516,1000 525,1020 534,1050 539,1037 545,1050 551,1105 556,1235 562,1245 570,1172 578,1155 585,1145 592,1215 598,1217 607,1236 615,1202 622,1218 630,1260 638,1245 645,1200 655,1190 664,1215 674,1178 680,1180 686,1155 697,1162 702,1200 709,1168 715,1160 720,1118 727,1095 731,1122 738,1110 745,1110 747,1122 752,1123 757,1193 762,1190 770,1205 777,1182 781,1193 786,1168 793,1198 797,1185 806,1193 810,1203 825,1203 831,1190 834,1212 842,1245 849,1280 856,1288 861,1320 862,1342 866,1350 870,1383 877,1340 886,1320 888,1338 896,1325 904,1302 912,1320 920,1322 928,1290 936,1302 946,1260 957,1217 966,1195 973,1185 980,1215 986,1190 996,1208 1005,1198 1012,1200 1018,1252 1023,1257 1028,1240 1036,1233 1045,1190 1053,1166 1058,1183 1064,1212 1066,1200 1073,1230 1080,1197 1090,1215 1105,1222 1110,1212 1117,1250 1123,1245 1130,1190 1138,1155 1142,1240 1147,1282 1152,1265 1158,1297 1165,1262 1170,1282 1175,1242 1186,1252 1192,1225 1199,1275 1205,1250 1212,1252 1219,1272 1224,1258 1230,1255 1235,1205 1238,1110 1241,1088 1246,1190 1251,1193 1256,1148 1260,1170 1270,1110 1274,1110 1281,1130 1287,1082 1293,1115 1300,1143 1307,1110 1314,1108 1320,1062 1327,1048 1334,1072 1337,1027 1346,1022 1353,990 1357,1015 1362,990 1367,1022 1371,1085 1377,1102 1383,1100 1385,1088 1388,1115 1394,1097 1403,1130 1410,1067 1417,1050 1425,1052 1428,1075 1428,838 1429,1075 1434,1030 1439,1022 1445,1060 1452,1077 1460,1070 1468,1092 1478,1073 1490,1080 1492,432 1503,432';
  let s = '';
  [[220, '9', 232], [487, '10', 487], [756, '11', 756], [1023, '12', 1023], [1292, '13', 1292], [1493, '13:45', 1475]].forEach(([v, t, at]) => {
    const x = Math.floor(X(v)) + .5;
    s += line(x, 590, x, 1009, '#3a3a3a') + line(x, 1010, x, 1019, '#ffff00') + label(X(at), 1031, t, 15, '#ffff00', bold + ' ' + mid);
  });
  [[199, '27.96', '#ff0000'], [271, '27.82', '#ffffff', '#30485c'], [607, '27.17', '#00e600', '#3a3a3a'], [943, '26.52', '#00e600', '#3a3a3a'], [1277, '25.87', '#00e600', '#3a3a3a'], [1457, '25.52', '#00e600']].forEach(([v, t, c, g]) => {
    const y = Math.round(Y(v)) + .5;
    if (g) s += line(1323, y, 1852, y, g);
    s += label(1319, Y(v), t, 15, c, bold + ' text-anchor="end"');
  });
  s += frame(1322, 590, 1851, 1009, '#c0c0c0');
  s += `<polyline fill="none" stroke="#ffff00" stroke-width="2" stroke-linejoin="round" points="${pts.split(' ').map(p => { const [a, b] = p.split(','); return X(+a) + ',' + Y(+b); }).join(' ')}"/>`;
  s += label(X(1447), Y(407), '27.51', 15, '#ff0000', bold + ' text-anchor="end"') + `<path d="M1817 660h15M1827 655l6 5-6 5" fill="none" stroke="#ff0000" stroke-width="2.500"/>`;
  s += label(X(915), Y(1412), '25.66', 15, '#00a8ff', bold) + `<path d="M1604 995h-15M1594 990l-6 5 6 5" fill="none" stroke="#00a8ff" stroke-width="2.500"/>`;
  document.getElementById('vix').innerHTML = s;
})();
</script>
</body>
</html>
